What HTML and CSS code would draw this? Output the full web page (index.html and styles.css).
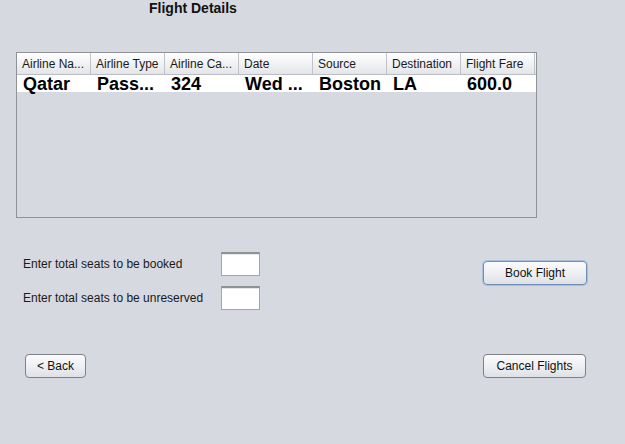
FILE: index.html
```html
<!DOCTYPE html>
<html>
<head>
<meta charset="utf-8">
<link rel="stylesheet" href="styles.css">
</head>
<body>
<div class="page">
  <div class="title">Flight Details</div>
  <div class="table-wrap">
    <div class="thead">
      <div class="th">Airline Na...</div>
      <div class="th">Airline Type</div>
      <div class="th">Airline Ca...</div>
      <div class="th">Date</div>
      <div class="th">Source</div>
      <div class="th">Destination</div>
      <div class="th">Flight Fare</div>
    </div>
    <div class="row">
      <div class="td">Qatar</div>
      <div class="td">Pass...</div>
      <div class="td">324</div>
      <div class="td">Wed ...</div>
      <div class="td">Boston</div>
      <div class="td">LA</div>
      <div class="td">600.0</div>
    </div>
  </div>
  <div class="middle">
    <div class="form">
      <div class="frow">
        <span class="label">Enter total seats to be booked</span>
        <span class="field"></span>
      </div>
      <div class="frow">
        <span class="label">Enter total seats to be unreserved</span>
        <span class="field"></span>
      </div>
    </div>
    <button class="btn btn-book focused">Book Flight</button>
  </div>
  <div class="bottom">
    <button class="btn btn-back">&lt; Back</button>
    <button class="btn btn-cancel">Cancel Flights</button>
  </div>
</div>
</body>
</html>
```

FILE: styles.css
```css
html, body {
  margin: 0;
  padding: 0;
  background: #d6d9df;
}
.page {
  width: 625px;
  height: 444px;
  font-family: "Liberation Sans", Arial, sans-serif;
  color: #111;
  box-sizing: border-box;
}
.title {
  padding-left: 149px;
  font-weight: bold;
  font-size: 14px;
  line-height: 16px;
  height: 16px;
  color: #111;
}
.table-wrap {
  margin-top: 36px;
  margin-left: 16px;
  width: 521px;
  height: 166px;
  box-sizing: border-box;
  border: 1px solid #8f9296;
  background: #d6d9df;
}
.thead {
  display: grid;
  grid-template-columns: repeat(7, 74px);
  height: 21px;
  border-bottom: 1px solid #b9bcc2;
  background: linear-gradient(#ffffff, #f1f2f4 50%, #e3e5e9);
}
.th {
  font-size: 12px;
  line-height: 22px;
  padding-left: 5px;
  border-right: 1px solid #bfc2c8;
  white-space: nowrap;
  overflow: hidden;
  color: #1a1a1a;
}
.row {
  display: grid;
  grid-template-columns: repeat(7, 74px);
  height: 17px;
  width: 519px;
  background: #fff;
}
.td {
  font-size: 18px;
  font-weight: bold;
  line-height: 19px;
  height: 17px;
  padding-left: 6px;
  white-space: nowrap;
  color: #000;
}
.middle {
  display: flex;
  align-items: flex-start;
  margin-top: 34px;
}
.form {
  display: flex;
  flex-direction: column;
  gap: 10px;
  margin-left: 23px;
}
.frow {
  display: flex;
  align-items: center;
  height: 24px;
}
.label {
  font-size: 12px;
  width: 198px;
  color: #1a1a1a;
}
.field {
  display: block;
  box-sizing: border-box;
  width: 39px;
  height: 24px;
  background: #fff;
  border: 1px solid #a2a5ab;
  border-top: 2px solid #8e9196;
  box-shadow: inset 0 1px 0 #e6e7ea;
}
.btn {
  font-family: "Liberation Sans", Arial, sans-serif;
  font-size: 12px;
  color: #111;
  height: 24px;
  box-sizing: border-box;
  border: 1px solid #7d8188;
  border-radius: 4px;
  background: linear-gradient(#fbfbfc, #eff0f3 50%, #dde0e5);
  padding: 0;
  line-height: 22px;
}
.btn-book {
  width: 104px;
  margin-left: auto;
  margin-right: 38px;
  margin-top: 9px;
}
.focused {
  border-color: #6f8fb8;
  box-shadow: 0 0 0 1px #a9c0dd;
}
.bottom {
  display: flex;
  margin-top: 44px;
  padding: 0 39px 0 25px;
  justify-content: space-between;
}
.btn-back {
  width: 61px;
}
.btn-cancel {
  width: 103px;
}
```
